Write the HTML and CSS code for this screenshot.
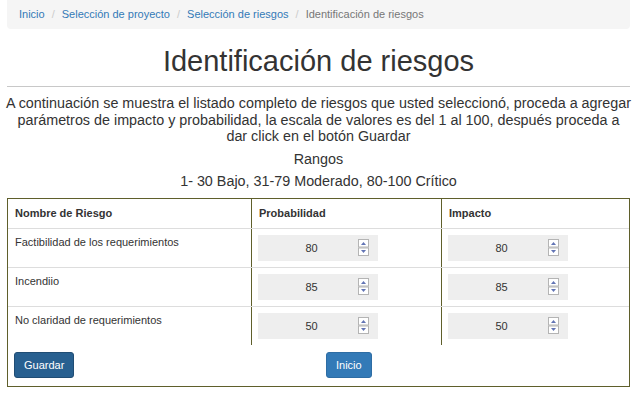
FILE: index.html
```html
<!DOCTYPE html>
<html>
<head lang="es">
    <meta charset="UTF-8">
    <title>Identificación de riesgos</title>
    <link rel="stylesheet" href="styles.css">
</head>
<body>
  <div class="page">
      <ul class="breadcrumb">
          <li><a href="#">Inicio</a></li>
          <li><a href="#">Selección de proyecto</a></li>
          <li><a href="#">Selección de riesgos</a></li>
          <li class="active">Identificación de riesgos</li>
      </ul>
      <h1>Identificación de riesgos</h1>
      <hr>
      <p class="intro">A continuación se muestra el listado completo de riesgos que usted seleccionó, proceda a agregar parámetros de impacto y probabilidad, la escala de valores es del 1 al 100, después proceda a<br>dar click en el botón Guardar</p>
      <p class="rangos">Rangos</p>
      <p class="rangos">1- 30 Bajo, 31-79 Moderado, 80-100 Crítico</p>

      <form class="frame">
          <div class="row head">
              <div class="cell">Nombre de Riesgo</div>
              <div class="cell">Probabilidad</div>
              <div class="cell">Impacto</div>
          </div>
          <div class="row">
              <div class="cell name">Factibilidad de los requerimientos</div>
              <div class="cell"><div class="num"><input type="text" value="80"><svg class="spin" width="11" height="17" viewBox="0 0 11 17"><rect x="0.5" y="0.5" width="10" height="7.5" fill="#fff" stroke="#b4b4b4"/><rect x="0.5" y="9" width="10" height="7.5" fill="#fff" stroke="#b4b4b4"/><polygon points="3,6 5.5,3 8,6" fill="#6274b4"/><polygon points="3,11 8,11 5.5,14" fill="#6274b4"/></svg></div></div>
              <div class="cell"><div class="num"><input type="text" value="80"><svg class="spin" width="11" height="17" viewBox="0 0 11 17"><rect x="0.5" y="0.5" width="10" height="7.5" fill="#fff" stroke="#b4b4b4"/><rect x="0.5" y="9" width="10" height="7.5" fill="#fff" stroke="#b4b4b4"/><polygon points="3,6 5.5,3 8,6" fill="#6274b4"/><polygon points="3,11 8,11 5.5,14" fill="#6274b4"/></svg></div></div>
          </div>
          <div class="row">
              <div class="cell name">Incendiio</div>
              <div class="cell"><div class="num"><input type="text" value="85"><svg class="spin" width="11" height="17" viewBox="0 0 11 17"><rect x="0.5" y="0.5" width="10" height="7.5" fill="#fff" stroke="#b4b4b4"/><rect x="0.5" y="9" width="10" height="7.5" fill="#fff" stroke="#b4b4b4"/><polygon points="3,6 5.5,3 8,6" fill="#6274b4"/><polygon points="3,11 8,11 5.5,14" fill="#6274b4"/></svg></div></div>
              <div class="cell"><div class="num"><input type="text" value="85"><svg class="spin" width="11" height="17" viewBox="0 0 11 17"><rect x="0.5" y="0.5" width="10" height="7.5" fill="#fff" stroke="#b4b4b4"/><rect x="0.5" y="9" width="10" height="7.5" fill="#fff" stroke="#b4b4b4"/><polygon points="3,6 5.5,3 8,6" fill="#6274b4"/><polygon points="3,11 8,11 5.5,14" fill="#6274b4"/></svg></div></div>
          </div>
          <div class="row">
              <div class="cell name">No claridad de requerimientos</div>
              <div class="cell"><div class="num"><input type="text" value="50"><svg class="spin" width="11" height="17" viewBox="0 0 11 17"><rect x="0.5" y="0.5" width="10" height="7.5" fill="#fff" stroke="#b4b4b4"/><rect x="0.5" y="9" width="10" height="7.5" fill="#fff" stroke="#b4b4b4"/><polygon points="3,6 5.5,3 8,6" fill="#6274b4"/><polygon points="3,11 8,11 5.5,14" fill="#6274b4"/></svg></div></div>
              <div class="cell"><div class="num"><input type="text" value="50"><svg class="spin" width="11" height="17" viewBox="0 0 11 17"><rect x="0.5" y="0.5" width="10" height="7.5" fill="#fff" stroke="#b4b4b4"/><rect x="0.5" y="9" width="10" height="7.5" fill="#fff" stroke="#b4b4b4"/><polygon points="3,6 5.5,3 8,6" fill="#6274b4"/><polygon points="3,11 8,11 5.5,14" fill="#6274b4"/></svg></div></div>
          </div>
          <div class="actions">
              <button type="button" class="btn btn-save">Guardar</button>
              <button type="button" class="btn btn-home">Inicio</button>
          </div>
      </form>
  </div>
</body>
</html>
```

FILE: styles.css
```css
*{
    margin: 0;
    padding: 0;
    box-sizing: border-box;
}
body{
    font-family: "Liberation Sans", Arial, sans-serif;
    color: #333;
}
a{
    color: #337ab7;
    text-decoration: none;
}
.page{
    width: 623px;
    margin-left: 7px;
}

/* migas de pan */
.breadcrumb{
    display: flex;
    list-style: none;
    height: 29px;
    padding: 0 12px;
    background: #f5f5f5;
    border-radius: 0 0 4px 4px;
    font-size: 11px;
    line-height: 29px;
}
.breadcrumb li + li:before{
    content: "/";
    padding: 0 7px;
    color: #ccc;
}
.breadcrumb .active{
    color: #777;
}

h1{
    margin: 16px 0 9px;
    font-size: 29px;
    line-height: 32px;
    font-weight: normal;
    text-align: center;
}
hr{
    border: 0;
    border-top: 1px solid #c8c8c8;
    margin-bottom: 8px;
}
.intro{
    margin: 0 -4px;
    font-size: 14.35px;
    line-height: 16.6px;
    text-align: center;
}
.rangos{
    margin-top: 6px;
    font-size: 14.35px;
    line-height: 16.6px;
    text-align: center;
}

/* tabla */
.frame{
    margin-top: 8px;
    border: 1px solid #5f5f2b;
}
.row{
    display: grid;
    grid-template-columns: 243px 190px 188px;
}
.row + .row{
    border-top: 1px solid #ddd;
}
.cell{
    padding: 6px;
    font-size: 11px;
    line-height: 13px;
}
.cell + .cell{
    border-left: 1px solid #5f5f2b;
}
.head .cell{
    padding: 8px 7px;
    font-weight: bold;
}
.cell.name{
    padding: 7px;
}
.num{
    display: flex;
    align-items: center;
    width: 120px;
    height: 26px;
    background: #eee;
}
.num input{
    flex: 1;
    min-width: 0;
    height: 26px;
    padding-left: 7px;
    border: 0;
    background: transparent;
    font-family: "Liberation Sans", Arial, sans-serif;
    font-size: 11px;
    color: #333;
    text-align: center;
}
.spin{
    display: block;
    margin-right: 9px;
}

.actions{
    display: grid;
    grid-template-columns: 243px 190px 188px;
    padding: 7px 0 8px;
}
.btn{
    justify-self: start;
    height: 26px;
    padding: 0 9px;
    border: 1px solid #2e6da4;
    border-radius: 3px;
    background: #337ab7;
    color: #fff;
    font-family: "Liberation Sans", Arial, sans-serif;
    font-size: 11px;
    line-height: 24px;
    cursor: pointer;
}
.btn-save{
    margin-left: 6px;
    background: #286090;
    border-color: #204d74;
}
.btn-home{
    margin-left: 75px;
}
```
